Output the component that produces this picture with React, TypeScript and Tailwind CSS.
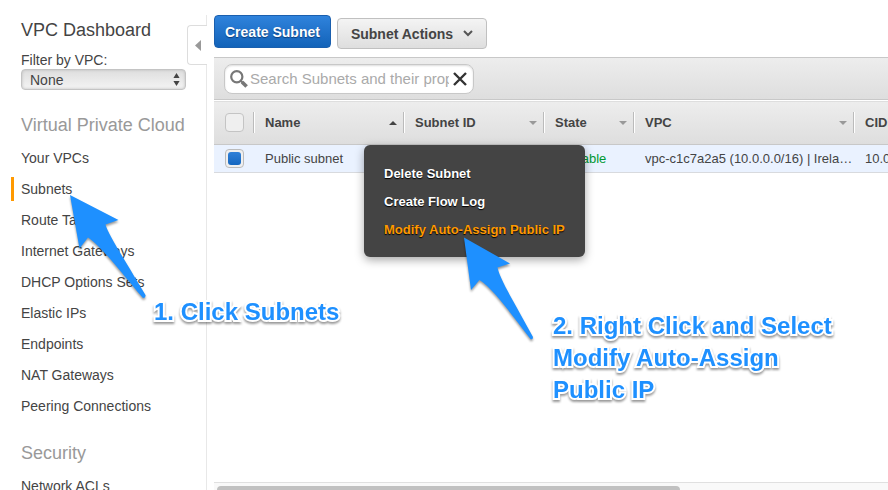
import { useState } from "react";

const vpcLinks = [
  "Your VPCs",
  "Subnets",
  "Route Tables",
  "Internet Gateways",
  "DHCP Options Sets",
  "Elastic IPs",
  "Endpoints",
  "NAT Gateways",
  "Peering Connections",
];

const securityLinks = ["Network ACLs"];

const menuItems = ["Delete Subnet", "Create Flow Log", "Modify Auto-Assign Public IP"];

function NavGroup({ title, links }: { title: string; links: string[] }) {
  return (
    <section className="mt-[23px]">
      <h2 className="pl-[10px] text-lg leading-6 text-[#999]">{title}</h2>
      <ul className="mt-[9px] flex flex-col gap-[7px]">
        {links.map((link) => (
          <li key={link}>
            <a
              href="#"
              className={
                link === "Subnets"
                  ? "block border-l-3 border-[#f90] pl-[7px] text-sm leading-6"
                  : "block border-l-3 border-transparent pl-[7px] text-sm leading-6"
              }
            >
              {link}
            </a>
          </li>
        ))}
      </ul>
    </section>
  );
}

function Sidebar() {
  return (
    <aside className="relative mt-[15px] w-[207px] shrink-0 border-r border-[#e8e8e8] pl-[11px] pr-5">
      <h1 className="mt-[3px] pl-[10px] text-lg leading-6">VPC Dashboard</h1>
      <div className="mt-[9px] pl-[10px]">
        <label htmlFor="vpc-filter" className="block text-sm leading-[18px]">
          Filter by VPC:
        </label>
        <div className="relative">
          <select
            id="vpc-filter"
            className="block h-[21px] w-full appearance-none rounded border border-[#c4c4c4] bg-linear-to-b from-[#dedede] to-[#f4f4f4] pl-2 text-sm leading-[18px] shadow-[inset_0_0_3px_#bbb]"
          >
            <option>None</option>
          </select>
          <svg className="pointer-events-none absolute right-[6px] top-1 h-[13px] w-[7px]" viewBox="0 0 7 13" fill="#444">
            <path d="M3.5 0 6.6 5H.4ZM3.5 13 6.6 8H.4Z" />
          </svg>
        </div>
      </div>

      <nav>
        <NavGroup title="Virtual Private Cloud" links={vpcLinks} />
        <NavGroup title="Security" links={securityLinks} />
      </nav>

      {/* Collapse handle */}
      <button
        aria-label="Collapse sidebar"
        className="absolute -right-px top-[10px] flex h-10 w-5 items-center rounded-l border border-r-0 border-[#ddd] bg-white pl-[7px]"
      >
        <svg className="h-[11px] w-[6px]" viewBox="0 0 6 11" fill="#999">
          <path d="M6 0V11L0 5.5Z" />
        </svg>
      </button>
    </aside>
  );
}

function SortMark({ up }: { up?: boolean }) {
  return (
    <svg className="h-[4px] w-[8px]" viewBox="0 0 8 4" fill={up ? "#444" : "#999"}>
      <path d={up ? "M0 4 4 0 8 4Z" : "M0 0H8L4 4Z"} />
    </svg>
  );
}

function HeaderCell({ label, sort }: { label: string; sort?: "up" | "down" }) {
  return (
    <th className="p-0 text-left font-bold">
      <div className="flex h-[21px] items-center justify-between border-r border-[#bbb] pl-[11px] pr-[6px] shadow-[1px_0_0_#fff]">
        <span>{label}</span>
        {sort && <SortMark up={sort === "up"} />}
      </div>
    </th>
  );
}

function Toolbar() {
  const [query, setQuery] = useState("");

  return (
    <div className="border-y border-[#c8c8c8] bg-linear-to-b from-[#ededed] to-[#dedede] px-[10px] pb-[5px] pt-[6px]">
      <div className="flex h-[30px] w-[250px] items-center rounded-lg border border-[#c8c8c8] bg-white pl-[5px] pr-[6px] shadow-[inset_0_1px_2px_#ddd]">
        <svg className="h-[18px] w-[18px] shrink-0" viewBox="0 0 18 18" fill="none" stroke="#777">
          <circle cx="6.8" cy="6.8" r="5.6" strokeWidth="2.2" />
          <path d="M11 11 13 13" strokeWidth="2" />
          <path d="M12 12 16.6 16.6" strokeWidth="3.6" />
        </svg>
        <input
          type="text"
          aria-label="Search subnets"
          value={query}
          onChange={(e) => setQuery(e.target.value)}
          placeholder="Search Subnets and their properties"
          className="ml-[2px] mr-1 min-w-0 flex-1 text-[15px] leading-5 outline-none placeholder:text-[#aaa]"
        />
        <button aria-label="Clear search" onClick={() => setQuery("")}>
          <svg className="h-[14px] w-[14px]" viewBox="0 0 14 14" fill="none" stroke="#333" strokeWidth="2.4">
            <path d="M1 1 13 13M13 1 1 13" />
          </svg>
        </button>
      </div>
    </div>
  );
}

function SubnetTable() {
  const [selected, setSelected] = useState(true);

  return (
    <table className="w-full min-w-[820px] table-fixed border-collapse text-[13px] leading-4">
      <colgroup>
        <col className="w-10" />
        <col className="w-[150px]" />
        <col className="w-[140px]" />
        <col className="w-[90px]" />
        <col className="w-[220px]" />
        <col />
      </colgroup>
      <thead>
        <tr className="h-11 border-b border-t border-b-[#c8c8c8] border-t-white bg-linear-to-b from-[#ededed] to-[#dedede]">
          <th className="p-0">
            <div className="flex h-[21px] items-center border-r border-[#bbb] pl-[11px] shadow-[1px_0_0_#fff]">
              <input
                type="checkbox"
                aria-label="Select all subnets"
                className="h-[19px] w-[19px] appearance-none rounded border border-[#c4c4c4] bg-[#efefef]"
              />
            </div>
          </th>
          <HeaderCell label="Name" sort="up" />
          <HeaderCell label="Subnet ID" sort="down" />
          <HeaderCell label="State" sort="down" />
          <HeaderCell label="VPC" sort="down" />
          <HeaderCell label="CIDR" />
        </tr>
      </thead>
      <tbody>
        <tr className="h-7 border-b border-[#d8dade] bg-[#eaf2ff]">
          <td className="p-0 pl-[11px]">
            <input
              type="checkbox"
              aria-label="Select Public subnet"
              checked={selected}
              onChange={(e) => setSelected(e.target.checked)}
              className="block h-[19px] w-[19px] appearance-none rounded border border-[#bbb] bg-[#efefef] p-[2px] before:block before:h-full before:rounded-[3px] checked:before:bg-linear-to-b checked:before:from-[#2f80d8] checked:before:to-[#1467c0]"
            />
          </td>
          <td className="p-0 pl-[11px]">Public subnet</td>
          <td className="p-0 pl-[11px]"></td>
          <td className="p-0 pl-[11px] text-[#093]">available</td>
          <td className="truncate p-0 pl-[11px]">vpc-c1c7a2a5 (10.0.0.0/16) | Irela…</td>
          <td className="p-0 pl-[11px]">10.0.0.0/24</td>
        </tr>
      </tbody>
    </table>
  );
}

function ContextMenu() {
  return (
    <div
      role="menu"
      className="absolute left-[364px] top-[145px] flex flex-col rounded-md bg-[#444] px-5 pb-[13px] pt-[15px] shadow-[0_3px_10px_rgba(0,0,0,0.35)]"
    >
      {menuItems.map((item) => (
        <button
          key={item}
          role="menuitem"
          className={
            item.startsWith("Modify")
              ? "h-7 text-left text-[13px] font-bold text-[#f90] [text-shadow:0_1px_1px_#000]"
              : "h-7 text-left text-[13px] font-bold text-white [text-shadow:0_1px_1px_#000]"
          }
        >
          {item}
        </button>
      ))}
    </div>
  );
}

function Annotations() {
  return (
    <div className="pointer-events-none absolute inset-0 text-2xl font-bold leading-8 text-[#1e90ff]">
      <svg className="absolute left-0 top-0 h-[490px] w-[888px] drop-shadow-[0_2px_1px_rgba(0,0,0,0.4)]" viewBox="0 0 888 490" fill="#1e90ff">
        <path d="M70 195 118.5 220 105.5 224.5C108 234 126 262 145.5 295Q146 298 143 298C124 276 103 248 88 237.5L79.5 248.5Z" />
        <path d="M464 237.5 510 263.5 497.5 267.5C500 280 516 305 533 337Q533 340 530.5 339C513 317 494 289 479.5 280L471 290Z" />
      </svg>
      <p className="absolute left-[154px] top-[296px] whitespace-nowrap [-webkit-text-stroke:4px_white] [paint-order:stroke_fill] drop-shadow-[0_2px_1px_rgba(0,0,0,0.4)]">
        1. Click Subnets
      </p>
      <p className="absolute left-[553px] top-[310px] whitespace-nowrap [-webkit-text-stroke:4px_white] [paint-order:stroke_fill] drop-shadow-[0_2px_1px_rgba(0,0,0,0.4)]">
        2. Right Click and Select
        <br />
        Modify Auto-Assign
        <br />
        Public IP
      </p>
    </div>
  );
}

export default function App() {
  return (
    <div className="relative flex h-screen overflow-hidden bg-white font-['Liberation_Sans',Arial,sans-serif] text-[#444]">
      <Sidebar />

      <main className="ml-[7px] flex min-w-0 flex-1 flex-col overflow-hidden pt-[15px]">
        <div className="mb-2 flex h-[34px] items-start gap-[6px]">
          <button className="h-[33px] rounded border border-[#1a5fae] bg-linear-to-b from-[#2f83dc] to-[#1263b9] px-[10px] text-sm font-bold text-white [text-shadow:0_1px_1px_#0a3c78]">
            Create Subnet
          </button>
          <button className="mt-[3px] flex h-[31px] items-center gap-[10px] rounded border border-[#c0c0c0] bg-linear-to-b from-[#f4f4f4] to-[#dedede] px-[13px] text-sm font-bold">
            Subnet Actions
            <svg className="h-[7px] w-[10px]" viewBox="0 0 10 7" fill="none" stroke="#555" strokeWidth="2">
              <path d="M1 1 5 5 9 1" />
            </svg>
          </button>
        </div>

        <Toolbar />
        <SubnetTable />

        {/* Horizontal scrollbar */}
        <div className="mt-auto h-2 overflow-hidden border-t border-[#e0e0e0] bg-[#f9f9f9] pl-[3px] pt-[3px]">
          <div className="h-2 w-[69%] rounded-md bg-[#c1c1c1]"></div>
        </div>
      </main>

      <ContextMenu />
      <Annotations />
    </div>
  );
}
